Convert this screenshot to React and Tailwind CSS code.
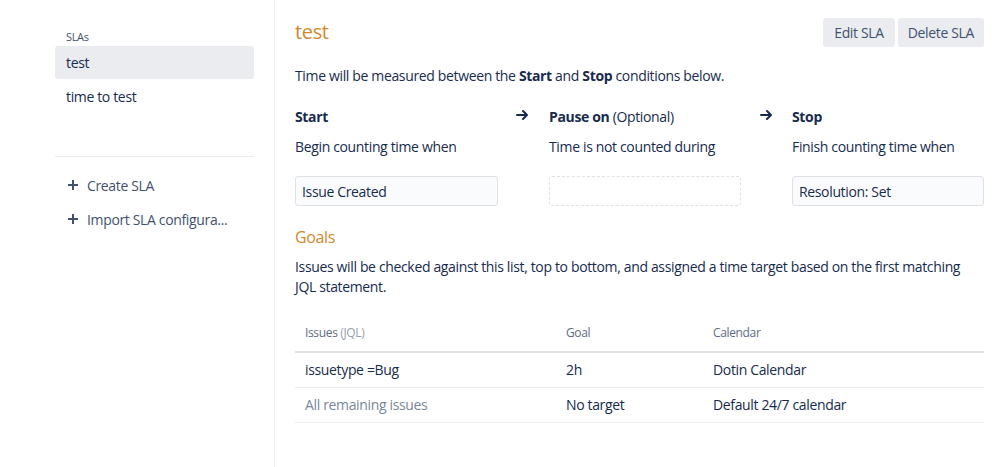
function Arrow() {
  return (
    <svg width="13" height="12" viewBox="0 0 13 12" className="mt-[2px]">
      <path d="M1 6h10M7 2l4 4-4 4" fill="none" stroke="#172b4d" strokeWidth="2" strokeLinecap="round" strokeLinejoin="round" />
    </svg>
  );
}

export default function App() {
  const font = { fontFamily: '"Open Sans", "Noto Sans", sans-serif', letterSpacing: "-0.35px" };
  return (
    <div className="flex h-[467px] w-[999px] overflow-hidden bg-white text-[14px] text-[#172b4d]" style={font}>
      <aside className="w-[275px] shrink-0 border-r border-[#ebecf0] pl-[55px] pr-[20px] pt-[30px]">
        <p className="pl-[11px] text-[11px] leading-[14px] text-[#42526e]">SLAs</p>
        <ul className="mt-[2px]">
          <li className="flex h-[33px] items-center rounded-[3px] bg-[#ebecf0] pl-[11px]">test</li>
          <li className="mt-px flex h-[33px] items-center pl-[11px]">time to test</li>
        </ul>
        <div className="mt-[43px] border-t border-[#ebecf0]" />
        <ul className="mt-[11px]">
          {["Create SLA", "Import SLA configura..."].map((item) => (
            <li className="flex h-[34px] items-center gap-[8px] pl-[12px] text-[#42526e]" key={item}>
              <svg width="12" height="12" viewBox="0 0 12 12">
                <path d="M6 1v10M1 6h10" stroke="#42526e" strokeWidth="2" />
              </svg>
              {item}
            </li>
          ))}
        </ul>
      </aside>

      <main className="flex-1 pl-[20px] pr-[15px] pt-[17px]">
        <div className="flex items-center justify-between">
          <h1 className="text-[20px] leading-[30px] text-[#d0892b]">test</h1>
          <div className="flex gap-[3px]">
            <button className="h-[29px] rounded-[3px] bg-[#ebecf0] px-[11px] text-[#42526e]">Edit SLA</button>
            <button className="h-[29px] rounded-[3px] bg-[#ebecf0] px-[10px] text-[#42526e]">Delete SLA</button>
          </div>
        </div>

        <p className="mt-[19px] leading-[20px]">
          Time will be measured between the <b>Start</b> and <b>Stop</b> conditions below.
        </p>

        <div className="mt-[21px] flex">
          <div className="w-[203px]">
            <h3 className="font-bold leading-[20px]">Start</h3>
            <p className="mt-[10px] leading-[20px]">Begin counting time when</p>
            <div className="mt-[19px] flex h-[30px] items-center rounded-[3px] border border-[#dfe1e6] bg-[#fafbfc] px-[6px]">Issue Created</div>
          </div>
          <div className="w-[51px] pl-[18px]"><Arrow /></div>
          <div className="w-[192px]">
            <h3 className="leading-[20px]"><b>Pause on</b> (Optional)</h3>
            <p className="mt-[10px] leading-[20px]">Time is not counted during</p>
            <div className="mt-[19px] h-[30px] rounded-[3px] border border-dashed border-[#dfe1e6]" />
          </div>
          <div className="w-[51px] pl-[19px]"><Arrow /></div>
          <div className="flex-1">
            <h3 className="font-bold leading-[20px]">Stop</h3>
            <p className="mt-[10px] leading-[20px]">Finish counting time when</p>
            <div className="mt-[19px] flex h-[30px] items-center rounded-[3px] border border-[#dfe1e6] bg-[#fafbfc] px-[6px]">Resolution: Set</div>
          </div>
        </div>

        <h2 className="mt-[19px] text-[16px] leading-[24px] text-[#d0892b]">Goals</h2>
        <p className="mt-[8px] leading-[20px]">
          Issues will be checked against this list, top to bottom, and assigned a time target based on the first matching JQL statement.
        </p>

        <table className="mt-[18px] w-full border-collapse text-left">
          <thead>
            <tr className="border-b-2 border-[#dfe1e6] text-[12px] text-[#5e6c84]">
              <th className="h-[37px] w-[271px] pl-[10px] font-normal">
                Issues <span className="text-[#97a0af]">(JQL)</span>
              </th>
              <th className="w-[147px] font-normal">Goal</th>
              <th className="font-normal">Calendar</th>
            </tr>
          </thead>
          <tbody>
            <tr className="border-b border-[#ebecf0]">
              <td className="h-[35px] pl-[10px]">issuetype =Bug</td>
              <td>2h</td>
              <td>Dotin Calendar</td>
            </tr>
            <tr className="border-b border-[#ebecf0]">
              <td className="h-[35px] pl-[10px] text-[#7a869a]">All remaining issues</td>
              <td>No target</td>
              <td>Default 24/7 calendar</td>
            </tr>
          </tbody>
        </table>
      </main>
    </div>
  );
}
